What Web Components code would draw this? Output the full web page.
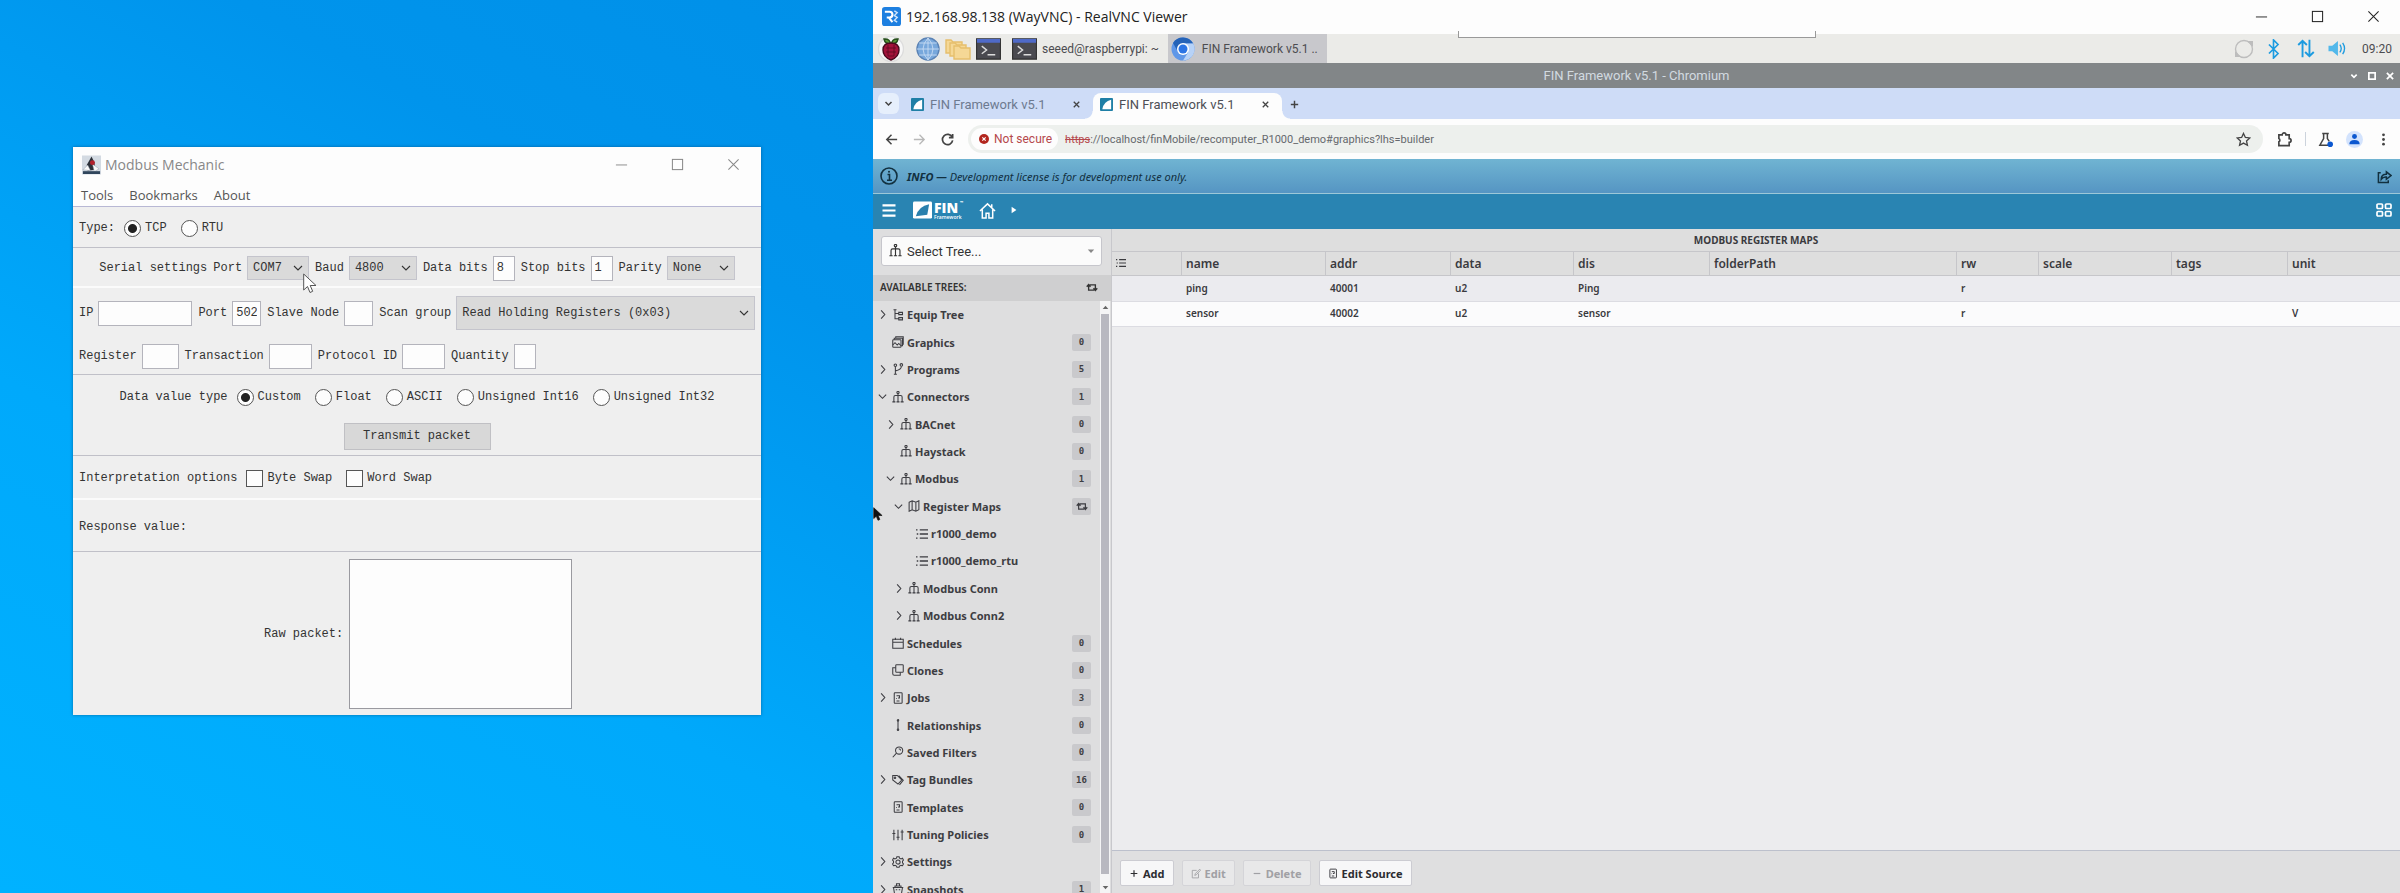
<!DOCTYPE html>
<html lang="en">
<head>
<meta charset="utf-8">
<title>Modbus Mechanic and FIN Framework</title>
<style>
html,body{margin:0;height:100%}
body{font-family:"Noto Sans","Open Sans",sans-serif;color:#333}
</style>
</head>
<body>
<demo-desktop>
  <modbus-window slot="local"></modbus-window>
  <vnc-window slot="remote" heading="192.168.98.138 (WayVNC) - RealVNC Viewer">
    <pi-taskbar></pi-taskbar>
    <chromium-window><fin-app></fin-app></chromium-window>
  </vnc-window>
</demo-desktop>

<script>
const BASE = '*{box-sizing:border-box}button,input,select,textarea{font:inherit;color:inherit;margin:0}button{cursor:default}';
const define = (name, render) => customElements.define(name, class extends HTMLElement {
  connectedCallback() {
    if (this.shadowRoot) return;
    const t = document.createElement('template');
    t.innerHTML = render(this).replace('<style>', '<style>' + BASE);
    this.attachShadow({ mode: 'open' }).append(t.content.cloneNode(true));
  }
});

/* ---------- icons ---------- */
const ICONS = {
  min: ['0 0 14 14', '<path d="M1 7.5h12"/>'],
  max: ['0 0 14 14', '<rect x="1.5" y="1.5" width="11" height="11"/>'],
  close: ['0 0 14 14', '<path d="M1.5 1.5l11 11M12.5 1.5l-11 11"/>'],
  down: ['0 0 12 12', '<path d="M2 4l4 4 4-4"/>'],
  right: ['0 0 12 12', '<path d="M4.5 1.5l4 4.5-4 4.5"/>'],
  caret: ['0 0 10 10', '<path d="M1 3h8L5 7.5z" fill="currentColor" stroke="none"/>'],
  caretup: ['0 0 10 10', '<path d="M1 7h8L5 2.500z" fill="currentColor" stroke="none"/>'],
  play: ['0 0 10 10', '<path d="M2 1l6 4-6 4z" fill="currentColor" stroke="none"/>'],
  org: ['0 0 16 16', '<circle cx="8" cy="2" r="1.500"/><path d="M8 3v12M2.500 14V8q0-2 2-2h7q2 0 2 2V14M.5 14.500h4M6 14.500h4M11.500 14.500h4"/>'],
  equip: ['0 0 16 16', '<path d="M2 1h4M4 1v12h5M4 6h5M9 4.500h5v3H9zM9 11.500h5v3H9z"/>'],
  graphics: ['0 0 16 16', '<rect x="1" y="5" width="11" height="10" rx="1"/><path d="M3 5V3h11v10h-2M5 3V1h10v10h-1M1 12l3-3 3 3 2-2 3 3"/>'],
  branch: ['0 0 16 16', '<circle cx="4.500" cy="3" r="1.700"/><circle cx="12.500" cy="2.500" r="1.700"/><path d="M4.500 5v10M12.500 4.500q0 4-8 6M2.500 15h4"/>'],
  map: ['0 0 16 16', '<path d="M1.500 3l4-2 5 2 4-2v12l-4 2-5-2-4 2zM5.500 1v12M10.500 3v12"/>'],
  list: ['0 0 16 16', '<path d="M5 2.500h11M5 8h11M5 13.500h11M0 2.500h2M1 8h2M0 13.500h2" stroke-width="1.900"/>'],
  calendar: ['0 0 16 16', '<path d="M1 3h14v12H1zM1 7h14M4.500 1v3M11.500 1v3"/>'],
  clone: ['0 0 16 16', '<rect x="5" y="1" width="10" height="10" rx="1"/><path d="M5 5H1v8q0 2 2 2h8v-4"/>'],
  doc: ['0 0 16 16', '<rect x="3" y="1" width="10.500" height="14" rx="1"/><path d="M6 5h4v3H8M6 8v1M6 12h4"/>'],
  rel: ['0 0 16 16', '<circle cx="8" cy="1.800" r="1"/><path d="M8 2v12"/><circle cx="8" cy="14.200" r="1"/>'],
  search: ['0 0 16 16', '<circle cx="9.500" cy="6" r="4.800"/><path d="M6 9.500L1 15M9 4q2-.5 2.500 2"/>'],
  tag: ['0 0 16 16', '<path d="M1 2h6l6 6-5 5.500L1 8zM9 2l6 6.500-5 6"/><circle cx="4" cy="5" r="1"/>'],
  sliders: ['0 0 16 16', '<path d="M2.500 1v14M8 1v14M13.500 1v14M.5 6h4M6 11h4M11.500 4h4"/>'],
  gear: ['0 0 16 16', '<path d="M6.500 1h3l.5 2 2 1 2-1 1.300 2.500L14 7v2l1.300 1.500L14 13l-2-.5-2 1-.5 1.500h-3L6 13.500l-2-1-2 .5-1.300-2.500L2 9V7L.7 5.500 2 3l2 1 2-1z"/><circle cx="8" cy="8" r="2.800"/>'],
  basket: ['0 0 16 16', '<path d="M1 6h14M2 6l1.500 9h9L14 6M4 6V4h8v2M6 4V1h4v3M5 9h2M9 9h2"/>'],
  edit: ['0 0 16 16', '<path d="M12 8v7H2V3h7"/><path d="M6 11l1-3 7-7 1 2-6.500 7z"/>'],
  plus: ['0 0 12 12', '<path d="M6 2v8M2 6h8"/>'],
  minus: ['0 0 12 12', '<path d="M2 6h8"/>'],
  swap: ['0 0 16 12', '<path d="M3.500 3v6.500H11M12.500 9V2.500H5M1 5l2.500-3L6 5M10 7l2.500 3L15 7"/>'],
  back: ['0 0 16 16', '<path d="M14 8H3M8 3L3 8l5 5"/>'],
  forward: ['0 0 16 16', '<path d="M2 8h11M8 3l5 5-5 5"/>'],
  reload: ['0 0 16 16', '<path d="M13 5.500A5.500 5.500 0 1 0 13.500 9M13.500 2v4h-4"/>'],
  blocked: ['0 0 12 12', '<circle cx="6" cy="6" r="6" fill="#b3261e" stroke="none"/><path d="M4 4l4 4M8 4l-4 4" stroke="#fff"/>'],
  star: ['0 0 16 16', '<path d="M8 1.500l2 4.300 4.700.5-3.500 3.200 1 4.700L8 11.800l-4.200 2.400 1-4.700L1.300 6.300 6 5.800z"/>'],
  puzzle: ['0 0 16 16', '<path d="M2 3h3.500a2 2 0 0 1 4 0H13v4a2 2 0 0 1 0 4v3.500H2v-4a2 2 0 0 0 0-3.500z"/>'],
  flask: ['0 0 16 16', '<path d="M4.500 1.500h7M6 2v5l-4 7h9M10 2v5l2 3"/><circle cx="13" cy="13" r="3" fill="#0b57d0" stroke="none"/>'],
  avatar: ['0 0 18 18', '<circle cx="9" cy="9" r="9" fill="#d3e3fd" stroke="none"/><circle cx="9" cy="5.800" r="2.600" fill="#0b57d0" stroke="none"/><path d="M3.500 14q0-4.500 5.500-4.500t5.500 4.500z" fill="#0b57d0" stroke="none"/>'],
  dots: ['0 0 16 16', '<g fill="currentColor" stroke="none"><circle cx="8" cy="3" r="1.500"/><circle cx="8" cy="8" r="1.500"/><circle cx="8" cy="13" r="1.500"/></g>'],
  info: ['0 0 18 18', '<circle cx="9" cy="9" r="8"/><path d="M7.500 7.500H9.500V13M7 13.200h5"/><circle cx="9" cy="4.700" r="1" fill="currentColor" stroke="none"/>'],
  share: ['0 0 16 16', '<path d="M4 4H1.500v10.500H12V12"/><path d="M4.500 11q0-5.500 5.500-5.500V3L15 7l-5 4V8.500q-3.500-.5-5.500 2.500z"/>'],
  grid: ['0 0 16 14', '<rect x="1" y="1" width="5.500" height="4.500" rx="1"/><rect x="9.500" y="1" width="5.500" height="4.500" rx="1"/><rect x="1" y="8.500" width="5.500" height="4.500" rx="1"/><rect x="9.500" y="8.500" width="5.500" height="4.500" rx="1"/>'],
  menu: ['0 0 14 14', '<path d="M0 1.500h14M0 7h14M0 12.500h14"/>'],
  home: ['0 0 18 18', '<path d="M1 9.500L9 2l8 7.500M3.500 8v9h4v-5h3v5h4V8M13.500 5.500V2.500"/>'],
  fav: ['0 0 14 14', '<rect width="14" height="14" rx="1" fill="#1f7fa6" stroke="none"/><path d="M12 2v10H2.500Q4 4 12 2z" fill="#fff" stroke="none"/>'],
  fin: ['0 0 20 18', '<rect width="20" height="18" rx="1.500" fill="#fff" stroke="none"/><path d="M17 3l-2 11-12 1.500Q6 5 17 3z" fill="#2a80ad" stroke="none"/>'],
  realvnc: ['0 0 20 20', '<rect width="20" height="20" rx="3" fill="#1d7fe0" stroke="none"/><path d="M3 5h5q3 0 3 3t-3 3H5M7 11l4 5" stroke="#fff" stroke-width="2.200"/><path d="M13 4l3 2-3 3 3 2-3 3 3 2" stroke="#cfe5fb" stroke-width="1.500"/>'],
  duke: ['0 0 20 20', '<rect width="20" height="20" fill="#d3dae2" stroke="none"/><path d="M10 1L5 10l1 6 8-1-1-8z" fill="#2c3038" stroke="none"/><path d="M1 15l5-5 3 6zM11 9l7 5-5 3z" fill="#fafafa" stroke="#8a97a5" stroke-width=".5"/><circle cx="11" cy="7.500" r="2.600" fill="#b3202c" stroke="none"/><path d="M1 18h18" stroke="#30455c" stroke-width="3"/>'],
  raspberry: ['0 0 26 26', '<circle cx="13" cy="13" r="12.500" fill="#f7f7f7" stroke="#ddd"/><path d="M12.500 8Q7 8 6 3q6-.5 6.500 5zM13.500 8q5.500 0 6.500-5-6-.5-6.500 5z" fill="#5b9a3c" stroke="#27501b"/><path d="M13 7q8 0 8 7 0 7-8 10-8-3-8-10 0-7 8-7z" fill="#a3123a" stroke="#490a1d"/><path d="M8 12h10M8 16h10M10 20h6M10 9v11M16 9v11" stroke="#5c0a20" stroke-width=".8"/>'],
  globe: ['0 0 24 24', '<circle cx="12" cy="12" r="11" fill="#78a8dc" stroke="#5b83b5"/><path d="M1 12h22M3 6h18M3 18h18M12 1v22M12 1Q2 12 12 23M12 1q10 11 0 22" stroke="#cfe1f5" stroke-width=".8"/>'],
  folders: ['0 0 26 22', '<g fill="#f5d896" stroke="#e6bf6c"><path d="M1 2h5l2 2h9v11H1z"/><path d="M5 5h5l2 2h9v11H5z"/><path d="M9 8h5l2 2h9v11H9z"/></g>'],
  terminal: ['0 0 26 22', '<rect x=".5" y=".5" width="25" height="21" fill="#4a4a50" stroke="#333"/><path d="M1 2.500h24" stroke="#4f6ac8" stroke-width="4"/><path d="M6 8l5 4-5 4M12 17h8" stroke="#ddd" stroke-width="1.500"/>'],
  chromium: ['0 0 24 24', '<circle cx="12" cy="12" r="11.500" fill="#5f97e8" stroke="none"/><path d="M12 .5A11.500 11.500 0 0 0 2 6l4.500 8L12 6.500h10.200A11.500 11.500 0 0 0 12 .5z" fill="#2563b8" stroke="none"/><path d="M22.200 6.500H12l5 9-5 8A11.500 11.500 0 0 0 22.200 6.500z" fill="#b7d2f7" stroke="none"/><circle cx="12" cy="12" r="6" fill="#fff" stroke="none"/><circle cx="12" cy="12" r="4.500" fill="#2b74e4" stroke="none"/>'],
  sync: ['0 0 20 20', '<circle cx="10" cy="10" r="8.500" stroke="#bdbdbd"/><path d="M13 2l6 0v6zM7 18l-6 0v-6z" fill="#bdbdbd" stroke="none"/>'],
  bluetooth: ['0 0 14 22', '<path d="M2 6l10 10-5 5V1l5 5L2 16"/>'],
  updown: ['0 0 20 22', '<path d="M6 21V2M1 7l5-5 5 5M14 1v19M9 15l5 5 5-5"/>'],
  speaker: ['0 0 20 18', '<path d="M1 6h4l6-5v16l-6-5H1z" fill="#52b8ea" stroke="none"/><path d="M13 5q3 4 0 8M16 3q4 6 0 12"/>']
};
define('x-icon', el => {
  const [box, art] = ICONS[el.getAttribute('name')];
  return `<style>:host{display:inline-flex;flex:none;width:11px;height:11px}svg{width:100%;height:100%;display:block}</style>
  <svg viewBox="${box}" fill="none" stroke="currentColor" stroke-width="${el.getAttribute('weight') || 1.4}" aria-hidden="true">${art}</svg>`;
});

define('mouse-pointer', el => `<style>:host{position:absolute;width:14px;height:22px;pointer-events:none;z-index:3}svg{display:block;width:100%;height:100%}</style>
  <svg viewBox="0 0 14 22"><path d="M.7 1v16l3.800-3.500 2.500 6 2.700-1.200-2.500-5.800H13z" fill="${el.getAttribute('fill')}" stroke="${el.getAttribute('edge')}" stroke-width="1"/></svg>`);

/* ---------- desktop ---------- */
define('demo-desktop', () => `<style>
:host{display:grid;grid-template-columns:873fr 1527fr;height:100vh;overflow:hidden}
.local{background:linear-gradient(28deg,#00b2ff 0%,#00a9fb 38%,#0094ec 75%,#0090e8 100%);padding:147px 112px 0 73px;min-width:0}
.remote{min-width:0;min-height:0;display:flex}
</style>
<main class="local"><slot name="local"></slot></main><section class="remote"><slot name="remote"></slot></section>`);

/* ---------- Modbus Mechanic controls ---------- */
define('java-field', el => {
  const w = el.getAttribute('width');
  return `<style>:host{display:flex;align-items:center;gap:5px}
input{width:${w}px;height:25px;border:1px solid #b4b4bc;background:#fdfdfd;padding:0 3px;outline:0}</style>
<label for="f">${el.getAttribute('label')}</label><input id="f" value="${el.getAttribute('value') || ''}">`;
});
define('java-select', el => `<style>:host{display:flex;align-items:center;gap:5px}
.box{position:relative;flex:1;min-width:${el.getAttribute('width') || 62}px;height:${el.getAttribute('height') || 24}px}
select{appearance:none;width:100%;height:100%;border:1px solid #c4c4cc;border-radius:0;background:#dadada;padding:0 5px;outline:0}
x-icon{position:absolute;right:5px;top:calc(50% - 6px);width:12px;height:12px}</style>
<label for="f">${el.getAttribute('label')}</label><div class="box"><select id="f"><option>${el.getAttribute('value')}</option></select><x-icon name="down" weight="1.1"></x-icon></div>`);
define('java-option', el => {
  const type = el.getAttribute('type');
  return `<style>:host{display:flex;align-items:center;gap:4px;margin-right:5px}
:host(:last-of-type){margin-right:0}
input{appearance:none;width:17px;height:17px;border:1px solid #555;background:#fdfdfd;border-radius:${type === 'radio' ? '50%' : '0'}}
input[type=radio]:checked{background:radial-gradient(circle,#222 0 4px,#fdfdfd 5px)}</style>
<input type="${type}" id="f" ${el.hasAttribute('checked') ? 'checked' : ''}><label for="f">${el.getAttribute('label')}</label>`;
});
define('window-buttons', () => `<style>:host{display:flex;gap:var(--gap,43px)}button{border:0;background:none;padding:0;width:13px;height:13px;display:flex}x-icon{width:13px;height:13px}</style>
<button aria-label="Minimize"><x-icon name="min" weight="1"></x-icon></button><button aria-label="Maximize"><x-icon name="max" weight="1.100"></x-icon></button><button aria-label="Close"><x-icon name="close" weight="1.100"></x-icon></button>`);

define('modbus-window', () => `<style>
:host{display:block;position:relative;background:#efefef;box-shadow:0 0 3px rgba(0,50,90,.5);color:#333;font:12px/16px "Liberation Mono","DejaVu Sans Mono",monospace;white-space:nowrap}
header{background:#fdfdfd;font-family:"Open Sans","Noto Sans",sans-serif;border-bottom:1px solid #b8b8d4}
.title{display:flex;align-items:center;height:35px;padding:0 21px 0 9px;gap:4px;font-size:14px;color:#888}
.title x-icon{width:19px;height:20px}
.title span{flex:1}
nav{display:flex;gap:16px;height:24px;padding:0 8px;font-size:13px;line-height:26px;color:#555}
nav button{border:0;padding:0;background:none;line-height:26px}
.row{display:flex;align-items:center;gap:6px;padding:2px 6px 0}
.opts{gap:9px}
.center{justify-content:center}
.line{border-bottom:1px solid #c0c0c8}
.white{border-bottom:2px solid #fbfbfb}
.action{padding-top:0}
.send{width:147px;height:27px;border:1px solid #c0c0c4;background:#d8d8d8}
.raw{height:163px;padding:0 0 0 191px}
textarea{width:223px;height:150px;border:1px solid #9a9aa0;background:#fdfdfd;resize:none;outline:0}
mouse-pointer{left:230px;top:126px}
</style>
<header><div class="title"><x-icon name="duke"></x-icon><span>Modbus Mechanic</span><window-buttons></window-buttons></div>
<nav><button>Tools</button><button>Bookmarks</button><button>About</button></nav></header>
<div class="row opts line" style="height:41px"><span>Type:</span><java-option type="radio" label="TCP" checked></java-option><java-option type="radio" label="RTU"></java-option></div>
<div class="row center white" style="height:40px"><span>Serial settings</span><java-select label="Port" value="COM7"></java-select><java-select label="Baud" value="4800" width="68"></java-select><java-field label="Data bits" width="22" value="8"></java-field><java-field label="Stop bits" width="22" value="1"></java-field><java-select label="Parity" value="None" width="68"></java-select></div>
<div class="row" style="height:48px"><java-field label="IP" width="94"></java-field><java-field label="Port" width="29" value="502"></java-field><java-field label="Slave Node" width="29"></java-field><java-select style="flex:1" label="Scan group" value="Read Holding Registers (0x03)" height="34"></java-select></div>
<div class="row line" style="height:39px"><java-field label="Register" width="37"></java-field><java-field label="Transaction" width="43"></java-field><java-field label="Protocol ID" width="43"></java-field><java-field label="Quantity" width="22"></java-field></div>
<div class="row opts center" style="height:42px"><span>Data value type</span><java-option type="radio" label="Custom" checked></java-option><java-option type="radio" label="Float"></java-option><java-option type="radio" label="ASCII"></java-option><java-option type="radio" label="Unsigned Int16"></java-option><java-option type="radio" label="Unsigned Int32"></java-option></div>
<div class="row center line action" style="height:39px"><button class="send">Transmit packet</button></div>
<div class="row opts white" style="height:44px"><span>Interpretation options</span><java-option type="checkbox" label="Byte Swap"></java-option><java-option type="checkbox" label="Word Swap"></java-option></div>
<div class="row line" style="height:52px"><span>Response value:</span></div>
<div class="row raw"><label for="raw">Raw packet:</label><textarea id="raw"></textarea></div>
<mouse-pointer fill="#fff" edge="#555"></mouse-pointer>`);

/* ---------- VNC viewer ---------- */
define('vnc-window', el => `<style>
:host{display:flex;flex-direction:column;flex:1;min-width:0;min-height:0;position:relative;background:#fdfdfd}
header{display:flex;align-items:center;height:34px;flex:none;padding:0 20px 2px 9px;gap:5px;font:14px "Open Sans","Noto Sans",sans-serif;color:#222}
header x-icon{width:19px;height:19px}
header span{flex:1}
.bar{position:absolute;left:585px;top:31px;width:358px;height:7px;background:#fdfdfd;border:1px solid #999;border-top:0;z-index:2}
mouse-pointer{left:0;top:507px;width:10px;height:15px}
</style>
<header><x-icon name="realvnc"></x-icon><span>${el.getAttribute('heading')}</span><window-buttons></window-buttons></header>
<div class="bar"></div><slot></slot><mouse-pointer fill="#111" edge="#111"></mouse-pointer>`);

define('pi-taskbar', () => `<style>
:host{display:flex;align-items:center;height:29px;flex:none;background:#ebebe8;padding:0 8px 0 5px;font:12px Roboto,"Noto Sans",sans-serif;color:#4c4c50}
button{border:0;background:none;padding:0;display:flex;align-items:center;height:29px;gap:5px}
.launch x-icon{width:26px;height:24px}
.task{margin-left:11px}
.task x-icon{width:25px;height:22px}
.active{background:#c8c8cc;width:159px;margin-left:9px;padding-left:3px;gap:7px}
.active x-icon{width:24px;height:24px}
.tray{display:flex;align-items:center;margin-left:auto;color:#1c9be0}
</style>
<button class="launch" aria-label="Menu"><x-icon name="raspberry" style="height:26px"></x-icon></button>
<button class="launch" aria-label="Browser" style="margin-left:12px"><x-icon name="globe" style="width:24px"></x-icon></button>
<button class="launch" aria-label="Files" style="margin-left:5px"><x-icon name="folders"></x-icon></button>
<button class="launch" aria-label="Terminal" style="margin-left:5px"><x-icon name="terminal" style="width:25px;height:22px"></x-icon></button>
<button class="task"><x-icon name="terminal"></x-icon>seeed@raspberrypi: ~</button>
<button class="task active"><x-icon name="chromium"></x-icon>FIN Framework v5.1 ..</button>
<div class="tray"><x-icon name="sync" style="width:20px;height:20px;margin-right:13px"></x-icon><x-icon name="bluetooth" weight="1.800" style="width:13px;height:20px;margin-right:16px"></x-icon><x-icon name="updown" weight="2.200" style="width:20px;height:19px;margin-right:11px"></x-icon><x-icon name="speaker" style="width:20px;height:17px;margin-right:15px"></x-icon></div><time>09:20</time>`);

/* ---------- Chromium ---------- */
define('browser-tab', el => `<style>
:host{display:flex;position:relative;align-items:center;height:26px;padding:0 10px 3px 7px;color:#6d7a90;width:189px}
:host([active]){background:#fdfdfd;border-radius:8px 8px 0 0;color:#4d4f55}
:host([active])::before,:host([active])::after{content:"";position:absolute;bottom:0;width:8px;height:8px}
:host([active])::before{left:-8px;background:radial-gradient(circle at 0 0,transparent 7px,#fdfdfd 8px)}
:host([active])::after{right:-8px;background:radial-gradient(circle at 100% 0,transparent 7px,#fdfdfd 8px)}
x-icon{width:13px;height:13px;margin-right:6px}
span{flex:1}
button{border:0;background:none;padding:0;display:flex;color:#444}
button x-icon{width:7px;height:7px;margin:0 3px}
</style><x-icon name="fav"></x-icon><span><slot></slot></span><button aria-label="Close tab"><x-icon name="close" weight="2.600"></x-icon></button>`);

define('chromium-window', () => `<style>
:host{display:flex;flex-direction:column;flex:1;min-height:0;font:13px Roboto,"Noto Sans",sans-serif;color:#444}
button{border:0;background:none;padding:0;display:flex;align-items:center;justify-content:center}
.title{flex:none;height:25px;background:#828688;color:#d2dae0;display:grid;grid-template-columns:1fr auto 1fr;align-items:center}
.ctl{display:flex;justify-content:flex-end;gap:10px;padding-right:6px;color:#fff}
.ctl x-icon{width:8px;height:8px}
.tabs{flex:none;height:31px;background:#cedcf7;display:flex;align-items:flex-end;padding-left:5px}
.search{width:21px;height:21px;border-radius:6px;background:#e6effc;margin:0 5px 5px 0}
.search x-icon{width:9px;height:9px}
.new{margin:0 7px 9px}
.tools{flex:none;height:40px;background:#fdfdfd;display:flex;align-items:center;padding:0 9px 0 11px}
.tools>button x-icon{width:15px;height:15px}
.nav{margin-right:13px}
.omni{flex:1;min-width:0;height:28px;border-radius:14px;background:#edf0ed;display:flex;align-items:center;padding:0 12px 0 3px;margin:0 14px 0 0;gap:7px}
.chip{display:flex;align-items:center;gap:5px;height:22px;border-radius:11px;background:#fdfdfd;color:#b5484c;font-size:12px;padding:0 6px 0 8px}
.chip x-icon{width:10px;height:10px}
.url{flex:1;font-size:11px;color:#66696e}
.url s{color:#b5484c}
.star x-icon{width:15px;height:15px}
.sep{width:1px;height:14px;background:#ccd3dc;margin:0 12px 0 13px}
</style>
<div class="title"><i></i><span>FIN Framework v5.1 - Chromium</span><div class="ctl"><button aria-label="Minimize"><x-icon name="down" weight="2.500"></x-icon></button><button aria-label="Maximize"><x-icon name="max" weight="3"></x-icon></button><button aria-label="Close"><x-icon name="close" weight="3"></x-icon></button></div></div>
<div class="tabs"><button class="search" aria-label="Search tabs"><x-icon name="down" weight="2"></x-icon></button>
<browser-tab>FIN Framework v5.1</browser-tab><browser-tab active>FIN Framework v5.1</browser-tab>
<button class="new" aria-label="New tab"><x-icon name="plus" weight="1.600"></x-icon></button></div>
<div class="tools"><button class="nav" aria-label="Back"><x-icon name="back" weight="1.600"></x-icon></button><button class="nav" aria-label="Forward" style="color:#b8b8b8"><x-icon name="forward"></x-icon></button><button class="nav" aria-label="Reload"><x-icon name="reload" weight="1.800"></x-icon></button>
<div class="omni"><button class="chip"><x-icon name="blocked"></x-icon>Not secure</button><div class="url"><s>https</s>://localhost/finMobile/recomputer_R1000_demo#graphics?lhs=builder</div><button class="star" aria-label="Bookmark"><x-icon name="star"></x-icon></button></div>
<button aria-label="Extensions"><x-icon name="puzzle" weight="1.800"></x-icon></button><div class="sep"></div><button aria-label="Experiments"><x-icon name="flask" weight="1.600"></x-icon></button><button aria-label="Profile" style="margin:0 13px"><x-icon name="avatar" style="width:17px;height:17px"></x-icon></button><button aria-label="More"><x-icon name="dots"></x-icon></button></div>
<slot></slot>`);

/* ---------- FIN ---------- */
define('tree-item', el => {
  const level = +el.getAttribute('level') || 0, open = el.getAttribute('state'), badge = el.getAttribute('badge');
  return `<style>
:host{display:flex;align-items:center;padding:0 9px 0 ${4 + level * 8}px;color:#3d3d42;font-weight:700;font-size:11px;white-space:nowrap}
.arrow{width:15px;display:flex;align-items:center}
.arrow x-icon{width:11px;height:11px}
.kind{width:12px;height:12px;margin-right:3px}
span{flex:1}
b{min-width:19px;height:17px;display:grid;place-items:center;background:#c9c9cc;border-radius:2px;font:700 9px "DejaVu Sans Mono",monospace}
b x-icon{width:12px;height:9px}
</style><div class="arrow">${open ? `<x-icon name="${open}" weight="1.2"></x-icon>` : ''}</div><x-icon class="kind" name="${el.getAttribute('icon')}"></x-icon><span>${el.textContent}</span>${badge ? `<b>${badge === 'swap' ? '<x-icon name="swap" weight="1.600"></x-icon>' : badge}</b>` : ''}`;
});

const TREE = [
  [0, 'right', 'equip', 'Equip Tree', ''], [0, '', 'graphics', 'Graphics', '0'], [0, 'right', 'branch', 'Programs', '5'],
  [0, 'down', 'org', 'Connectors', '1'], [1, 'right', 'org', 'BACnet', '0'], [1, '', 'org', 'Haystack', '0'],
  [1, 'down', 'org', 'Modbus', '1'], [2, 'down', 'map', 'Register Maps', 'swap'], [3, '', 'list', 'r1000_demo', ''],
  [3, '', 'list', 'r1000_demo_rtu', ''], [2, 'right', 'org', 'Modbus Conn', ''], [2, 'right', 'org', 'Modbus Conn2', ''],
  [0, '', 'calendar', 'Schedules', '0'], [0, '', 'clone', 'Clones', '0'], [0, 'right', 'doc', 'Jobs', '3'],
  [0, '', 'rel', 'Relationships', '0'], [0, '', 'search', 'Saved Filters', '0'], [0, 'right', 'tag', 'Tag Bundles', '16'],
  [0, '', 'doc', 'Templates', '0'], [0, '', 'sliders', 'Tuning Policies', '0'], [0, 'right', 'gear', 'Settings', ''],
  [0, 'right', 'basket', 'Snapshots', '1']
];
define('fin-tree', () => `<style>
:host{display:flex;flex-direction:column;width:239px;flex:none;background:#dededf;border-right:1px solid #c8c8cc;min-height:0;overflow:hidden}
.pick{position:relative;flex:none;margin:7px 9px 9px 8px;height:30px;color:#333}
select{appearance:none;width:100%;height:100%;border:1px solid #c6c6cc;border-radius:3px;background:#fbfbfb;padding:0 25px;font:13px Roboto,"Noto Sans",sans-serif;outline:0}
.pick x-icon{position:absolute;left:8px;top:8px;width:13px;height:13px}
.pick .c{left:auto;right:7px;top:11px;width:8px;height:8px;color:#888}
h2{flex:none;display:flex;align-items:center;justify-content:space-between;margin:0;height:26px;padding:0 13px 2px 7px;background:#cfcfd0;font-size:10px;font-weight:600;color:#333}
h2 x-icon{width:12px;height:9px}
.scroll{flex:1;min-height:0;display:flex;overflow:hidden}
.list{flex:1;display:grid;grid-template-rows:repeat(22,1fr);height:602px}
.bar{width:10px;margin-right:1px;background:#f4f4f5;display:flex;flex-direction:column;align-items:center;color:#666;padding:3px 0 2px}
.bar x-icon{width:7px;height:7px}
.thumb{flex:1;width:8px;background:#b8b8c0;margin:3px 0 10px}
</style>
<div class="pick"><select aria-label="Tree"><option>Select Tree...</option></select><x-icon name="org"></x-icon><x-icon class="c" name="caret"></x-icon></div>
<h2>AVAILABLE TREES:<x-icon name="swap" weight="1.800"></x-icon></h2>
<div class="scroll"><div class="list">${TREE.map(([l, s, i, t, b]) => `<tree-item level="${l}" state="${s}" icon="${i}" badge="${b}">${t}</tree-item>`).join('')}</div>
<div class="bar"><x-icon name="caretup"></x-icon><div class="thumb"></div><x-icon name="caret"></x-icon></div></div>`);

define('fin-button', el => `<style>:host{display:flex}button{display:flex;align-items:center;gap:4px;height:26px;padding:0 8px;border:1px solid #ccccd2;border-radius:2px;background:#f7f7f8;color:#2c2c30;font-weight:700;font-size:11px}
button:disabled{background:#e8e8e9;color:#a0a0a4;border-color:#d4d4d8}
x-icon{width:10px;height:11px}</style>
<button ${el.hasAttribute('disabled') ? 'disabled' : ''}><x-icon name="${el.getAttribute('icon')}" weight="1.400"></x-icon><slot></slot></button>`);

const COLS = [['', 70], ['name', 144], ['addr', 125], ['data', 123], ['dis', 136], ['folderPath', 247], ['rw', 82], ['scale', 133], ['tags', 116], ['unit', 0]];
const ROWS = [['', 'ping', '40001', 'u2', 'Ping', '', 'r', '', '', ''], ['', 'sensor', '40002', 'u2', 'sensor', '', 'r', '', '', 'V']];
define('register-maps', () => `<style>
:host{display:flex;flex-direction:column;flex:1;min-width:0;background:#ececee;color:#3a3a3e}
h1{margin:0;height:22px;background:#dedede;text-align:center;font-size:10px;line-height:23px;font-weight:700}
table{width:100%;table-layout:fixed;border-collapse:separate;border-spacing:0}
th,td{text-align:left;padding:0 4px;line-height:16px}
th{height:25px;background:#dedede;border:solid #c6c6ca;border-width:1px 1px 1px 0;font-size:12px;font-weight:600}
th:first-child,td:first-child{padding:0 4px}
th:last-child{border-right:0}
th x-icon{width:10px;height:10px}
td{height:26px;background:#ebebef;font-size:10px;font-weight:600;border-bottom:1px solid #dcdce2;padding-bottom:2px}
tr:nth-child(even) td{height:25px;background:#fbfbfc}
footer{margin-top:auto;display:flex;gap:8px;height:43px;padding:9px 8px;background:#dfdfe0;border-top:1px solid #bcc0cc}
</style>
<h1>MODBUS REGISTER MAPS</h1>
<table><colgroup>${COLS.map(c => `<col${c[1] ? ` style="width:${c[1]}px"` : ''}>`).join('')}</colgroup>
<thead><tr>${COLS.map(c => `<th scope="col">${c[0] || '<x-icon name="list"></x-icon>'}</th>`).join('')}</tr></thead>
<tbody>${ROWS.map(r => `<tr>${r.map(c => `<td>${c}</td>`).join('')}</tr>`).join('')}</tbody></table>
<footer><fin-button icon="plus">Add</fin-button><fin-button icon="edit" disabled>Edit</fin-button><fin-button icon="minus" disabled>Delete</fin-button><fin-button icon="doc">Edit Source</fin-button></footer>`);

define('fin-app', () => `<style>
:host{display:flex;flex-direction:column;flex:1;min-height:0;font-family:"Noto Sans","Open Sans",sans-serif}
button,a{border:0;background:none;padding:0;display:flex;color:inherit;text-decoration:none}
.info{flex:none;display:flex;align-items:center;height:35px;padding:0 8px 0 7px;background:linear-gradient(#70b4d2,#5595c3);border-bottom:1px solid #9cc8d8;color:#12303f;font-size:11px;font-style:italic}
.info p{margin:0 auto 0 9px}
.info>x-icon{width:18px;height:18px}
.info button x-icon{width:15px;height:15px}
.nav{flex:none;display:flex;align-items:center;height:35px;padding:0 8px 3px 9px;background:#2984b2;color:#fff}
.nav>button x-icon{width:14px;height:13px}
.logo{margin:0 15px 0 17px;gap:2px}
.logo x-icon{width:19px;height:18px}
.word{position:relative;font:800 14px/14px "Open Sans","Noto Sans",sans-serif;width:30px}
.word small{display:block;font-size:5px;line-height:4px;font-weight:600}
.word sup{position:absolute;left:26px;top:0;font-size:4px;line-height:4px}
.body{flex:1;display:flex;min-height:0}
</style>
<div class="info"><x-icon name="info" weight="1.600"></x-icon><p><strong>INFO —</strong> Development license is for development use only.</p><button aria-label="Open"><x-icon name="share" weight="1.600"></x-icon></button></div>
<div class="nav"><button aria-label="Menu"><x-icon name="menu" weight="2.200"></x-icon></button><a class="logo" href="#"><x-icon name="fin"></x-icon><div class="word">FIN<small>Framework</small><sup>™</sup></div></a><a href="#home" aria-label="Home"><x-icon name="home" weight="1.600" style="width:17px;height:17px"></x-icon></a><x-icon name="play" style="width:8px;height:8px;margin:0 auto 0 14px"></x-icon><button aria-label="Applications"><x-icon name="grid" weight="1.700" style="width:16px;height:14px"></x-icon></button></div>
<div class="body"><fin-tree></fin-tree><register-maps></register-maps></div>`);
</script>
</body>
</html>
